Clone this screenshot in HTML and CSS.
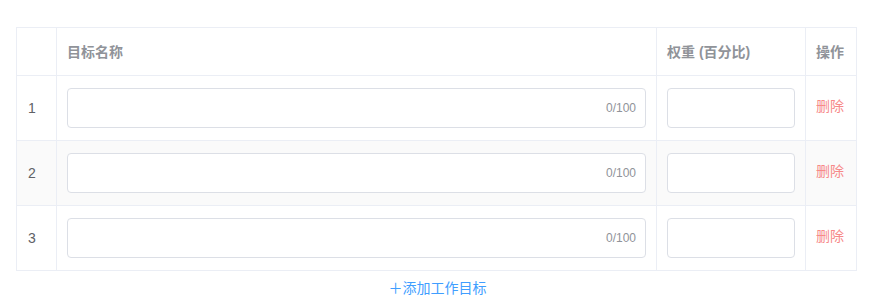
FILE: index.html
```html
<!DOCTYPE html>
<html lang="zh">
<head>
<meta charset="utf-8">
<link rel="stylesheet" href="styles.css">
</head>
<body>
<div class="wrap">
  <table class="tbl">
    <colgroup>
      <col class="c-idx"><col class="c-name"><col class="c-weight"><col class="c-op">
    </colgroup>
    <thead>
      <tr><th></th><th>目标名称</th><th>权重 (百分比)</th><th>操作</th></tr>
    </thead>
    <tbody>
      <tr>
        <td class="idx">1</td>
        <td><div class="input"><span class="count">0/100</span></div></td>
        <td><div class="input"></div></td>
        <td class="op"><span class="del">删除</span></td>
      </tr>
      <tr class="striped">
        <td class="idx">2</td>
        <td><div class="input"><span class="count">0/100</span></div></td>
        <td><div class="input"></div></td>
        <td class="op"><span class="del">删除</span></td>
      </tr>
      <tr>
        <td class="idx">3</td>
        <td><div class="input"><span class="count">0/100</span></div></td>
        <td><div class="input"></div></td>
        <td class="op"><span class="del">删除</span></td>
      </tr>
    </tbody>
  </table>
  <div class="add-row"><span class="add">＋添加工作目标</span></div>
</div>
</body>
</html>
```
FILE: styles.css
```css
* { box-sizing: border-box; }
body {
  margin: 0;
  background: #fff;
  font-family: "Liberation Sans", "Noto Sans CJK SC", sans-serif;
  font-size: 14px;
  color: #606266;
}
.wrap { padding: 27px 16px 0 16px; }
.tbl {
  width: 840px;
  border-collapse: collapse;
  table-layout: fixed;
  border: 1px solid #EBEEF5;
}
.c-idx { width: 40px; }
.c-name { width: 600px; }
.c-weight { width: 149px; }
.c-op { width: 51px; }
.tbl th, .tbl td {
  border: 1px solid #EBEEF5;
  padding: 12px 10px;
  text-align: left;
  vertical-align: middle;
}
.tbl th {
  color: #909399;
  font-weight: 700;
  font-size: 14px;
  line-height: 22px;
  height: 48px;
}
.tbl td { height: 65px; line-height: 23px; }
.tbl td.idx { padding-left: 11px; }
.tbl td.op { padding-bottom: 14px; padding-top: 10px; }
.striped td { background: #FAFAFA; }
.input {
  position: relative;
  height: 40px;
  border: 1px solid #DCDFE6;
  border-radius: 4px;
  background: #fff;
}
.count {
  position: absolute;
  right: 9px;
  top: 0;
  line-height: 38px;
  font-size: 12px;
  color: #909399;
}
.del { color: #F78989; font-size: 14px; white-space: nowrap; }
.add-row {
  display: flex;
  justify-content: center;
  padding-top: 7px;
  padding-left: 3px;
}
.add { color: #409EFF; font-size: 14px; line-height: 20px; }
```
